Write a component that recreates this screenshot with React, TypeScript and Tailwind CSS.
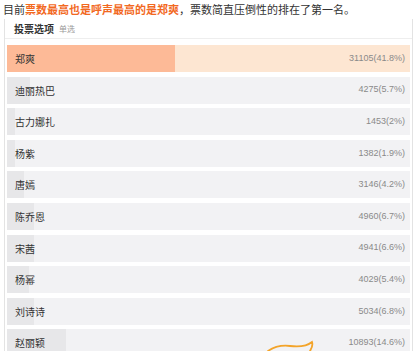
import React from 'react'

interface VoteRow {
  name: string
  count: number
  pct: string
  ratio: number
}

const rows: VoteRow[] = [
  { name: '郑爽', count: 31105, pct: '41.8%', ratio: 41.8 },
  { name: '迪丽热巴', count: 4275, pct: '5.7%', ratio: 5.7 },
  { name: '古力娜扎', count: 1453, pct: '2%', ratio: 2 },
  { name: '杨紫', count: 1382, pct: '1.9%', ratio: 1.9 },
  { name: '唐嫣', count: 3146, pct: '4.2%', ratio: 4.2 },
  { name: '陈乔恩', count: 4960, pct: '6.7%', ratio: 6.7 },
  { name: '宋茜', count: 4941, pct: '6.6%', ratio: 6.6 },
  { name: '杨幂', count: 4029, pct: '5.4%', ratio: 5.4 },
  { name: '刘诗诗', count: 5034, pct: '6.8%', ratio: 6.8 },
  { name: '赵丽颖', count: 10893, pct: '14.6%', ratio: 14.6 },
]

const font = { fontFamily: '"Noto Sans CJK SC", "Liberation Sans", sans-serif' }

function Row({ row, top }: { row: VoteRow; top: boolean }) {
  return (
    <div
      className={`relative h-[27px] shrink-0 flex items-center justify-between ${
        top ? 'bg-[#fde6d2]' : 'bg-[#f2f2f4]'
      }`}
    >
      {/* fill bar, width comes from the vote share */}
      <div
        className={`absolute inset-y-0 left-0 ${top ? 'bg-[#fdba97]' : 'bg-[#e7e7e9]'}`}
        style={{ width: `${row.ratio}%` }}
      />
      <span className="relative pl-[8px] text-[10px] text-[#333]">{row.name}</span>
      <span className="relative pr-[5px] text-[9px] text-[#8a8a8a] font-['Liberation_Sans']">
        {row.count}({row.pct})
      </span>
    </div>
  )
}

export default function App() {
  return (
    <div className="w-[415px] h-[351px] overflow-hidden bg-white relative" style={font}>
      <p className="h-[19px] pl-[3px] pt-[1px] text-[11px] leading-[16px] text-[#333] whitespace-nowrap">
        目前<span className="font-bold text-[#f2691f]">票数最高也是呼声最高的是郑爽</span>，票数简直压倒性的排在了第一名。
      </p>

      <div className="ml-[4px] w-[409px] border-x border-[#e3e3e3]">
        <div className="h-[20px] flex items-center gap-[5px] pl-[9px] border-b border-[#eeeeee]">
          <span className="text-[10px] font-bold text-[#333]">投票选项</span>
          <span className="text-[8px] text-[#999]">单选</span>
        </div>
        <div className="flex flex-col gap-[4.6px] px-[2px] pt-[6px]">
          {rows.map((r, i) => (
            <Row key={r.name} row={r} top={i === 0} />
          ))}
        </div>
      </div>

      {/* watermark doodle at the bottom */}
      <svg className="absolute left-[264px] top-[339px]" width="56" height="12" viewBox="0 0 56 12">
        <path
          d="M4 12 C10 8 18 6 26 7 C34 8 42 8 48 3 C49 6 48 9 46 12"
          fill="none"
          stroke="#f3a42a"
          strokeWidth="1.8"
          strokeLinecap="round"
        />
      </svg>
    </div>
  )
}
